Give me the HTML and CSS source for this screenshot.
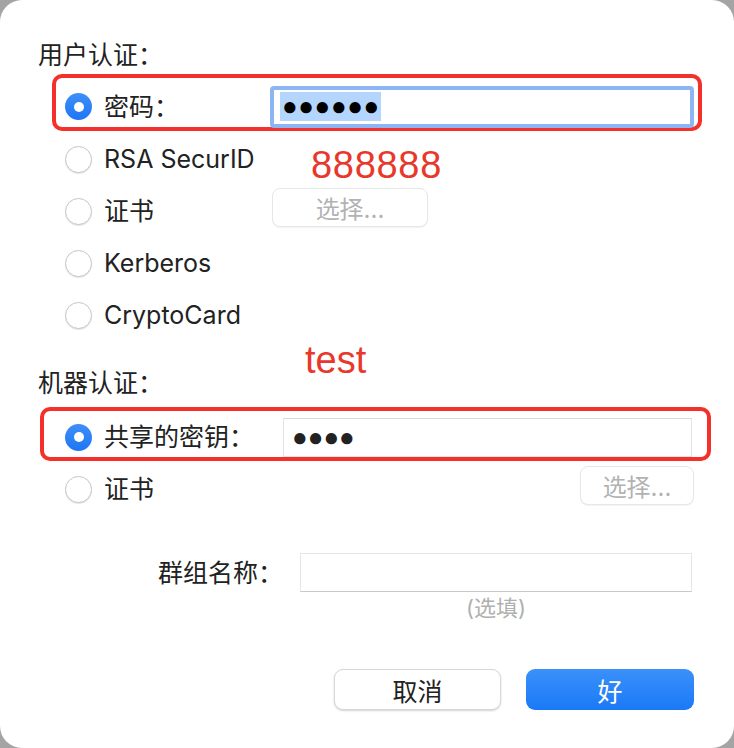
FILE: index.html
```html
<!DOCTYPE html>
<html lang="zh-CN">
<head>
<meta charset="utf-8">
<title>认证</title>
<link rel="stylesheet" href="styles.css">
</head>
<body>
<div class="window">
  <div class="title">用户认证：</div>
  <div class="mark mark-user">
    <span class="radio on"></span>
    <span class="label label-user">密码：</span>
    <div class="field field-focus"><span class="dots sel">●●●●●●</span></div>
  </div>
  <div class="opt">
    <span class="radio"></span>
    <span class="label label-user latin">RSA SecurID</span>
    <span class="note note-code">888888</span>
  </div>
  <div class="opt">
    <span class="radio"></span>
    <span class="label label-user">证书</span>
    <button class="btn choose choose-user">选择...</button>
  </div>
  <div class="opt">
    <span class="radio"></span>
    <span class="label label-user latin">Kerberos</span>
  </div>
  <div class="opt">
    <span class="radio"></span>
    <span class="label label-user latin">CryptoCard</span>
  </div>
  <div class="title title-machine">机器认证：<span class="note note-test">test</span></div>
  <div class="mark mark-machine">
    <span class="radio on"></span>
    <span class="label label-machine">共享的密钥：</span>
    <div class="field field-plain"><span class="dots dots-dark">●●●●</span></div>
  </div>
  <div class="opt opt-machine">
    <span class="radio"></span>
    <span class="label">证书</span>
    <button class="btn choose choose-machine">选择...</button>
  </div>
  <div class="group">
    <span class="label label-group">群组名称：</span>
    <div class="field field-group"></div>
  </div>
  <div class="hint">(选填)</div>
  <div class="footer">
    <button class="btn action cancel">取消</button>
    <button class="btn action ok">好</button>
  </div>
</div>
</body>
</html>
```
FILE: styles.css
```css
* { box-sizing: border-box; margin: 0; padding: 0; }
html, body { width: 734px; height: 748px; }
body {
  background: #a4a4a4;
  font-family: "Inter", "Noto Sans CJK SC", sans-serif;
  color: #222;
  font-size: 25px;
  overflow: hidden;
}
.window {
  width: 734px;
  height: 748px;
  background: #fff;
  border-radius: 22px;
  padding-top: 43px;
  display: flex;
  flex-direction: column;
}
.title {
  padding-left: 38px;
  height: 24px;
  line-height: 24px;
  font-size: 25px;
  position: relative;
}
.title-machine { margin-top: 30px; }
.mark {
  border: 4px solid #f3302a;
  border-radius: 10px;
  display: flex;
  align-items: center;
}
.mark-user {
  margin: 7px 0 0 52px;
  width: 650px;
  height: 57px;
  padding: 8px 4px 0 9px;
}
.mark-machine {
  margin: 12px 0 0 40px;
  width: 671px;
  height: 54px;
  padding: 6px 15px 0 21px;
}
.radio {
  flex: none;
  width: 27px;
  height: 27px;
  margin-right: 12px;
  border-radius: 50%;
  background: #fff;
  border: 1px solid #c6c6c6;
  box-shadow: 0 1px 1px rgba(0, 0, 0, 0.1);
  display: inline-flex;
  align-items: center;
  justify-content: center;
}
.radio.on {
  border: none;
  background: linear-gradient(#3f8ff8, #1f76f4);
  box-shadow: none;
}
.radio.on::after {
  content: "";
  width: 10px;
  height: 10px;
  border-radius: 50%;
  background: #fff;
}
.label {
  flex: none;
  font-size: 25px;
  line-height: 30px;
  white-space: nowrap;
}
.label-user { width: 166px; }
.label-machine { width: 179px; }
.field {
  flex: 1;
  background: #fff;
  display: flex;
  align-items: center;
}
.field-focus {
  height: 42px;
  border: 4px solid #8cb6f3;
  border-radius: 4px;
  padding-left: 6px;
}
.field-plain {
  height: 39px;
  border: 1px solid #e4e4e4;
  border-top-color: #d9d9d9;
  padding-left: 8px;
}
.dots {
  font-family: "Liberation Sans", sans-serif;
  font-size: 26px;
  letter-spacing: 0.6px;
  line-height: 29px;
  color: #000;
}
.sel {
  background: #b4d6fe;
  padding: 0 1px 0 2px;
}
.dots-dark { color: #222; letter-spacing: 0; }
.opt {
  height: 52px;
  padding-left: 65px;
  display: flex;
  align-items: center;
}
.mark-user + .opt { margin-top: 2px; }
.opt-machine { margin-top: 2px; padding-right: 40px; }
.note {
  font-family: "Liberation Sans", sans-serif;
  font-size: 38px;
  line-height: 38px;
  color: #e8382c;
}
.note-code { margin-left: 41px; margin-top: 12px; letter-spacing: 0.7px; }
.note-test { position: absolute; left: 305px; top: -30px; }
.btn {
  font-family: "Inter", "Noto Sans CJK SC", sans-serif;
  font-size: 24px;
  background: #fff;
  border-radius: 8px;
  cursor: default;
}
.choose {
  height: 39px;
  border: 1px solid #e7e7e7;
  box-shadow: 0 1px 1px rgba(0, 0, 0, 0.05);
  color: #b2b2b2;
}
.choose-user { width: 156px; margin-left: 2px; margin-top: -7px; }
.choose-machine { width: 114px; margin-left: auto; margin-top: -7px; }
.group {
  margin-top: 38px;
  padding-left: 158px;
  display: flex;
  align-items: center;
  height: 39px;
}
.label-group { width: 142px; }
.field-group {
  flex: none;
  width: 392px;
  height: 39px;
  border: 1px solid #e6e6e6;
  border-bottom: 1px solid #c9c9c9;
}
.hint {
  margin-top: 5px;
  margin-left: 300px;
  width: 392px;
  text-align: center;
  font-size: 22px;
  line-height: 22px;
  color: #b0b0b0;
}
.footer {
  margin-top: 50px;
  display: flex;
  justify-content: flex-end;
  gap: 25px;
  padding-right: 40px;
}
.action { height: 41px; border-radius: 9px; font-size: 25px; }
.cancel {
  width: 167px;
  border: 1px solid #d8d8d8;
  box-shadow: 0 1px 2px rgba(0, 0, 0, 0.18);
  color: #222;
}
.ok {
  width: 168px;
  border: none;
  background: linear-gradient(#3b91fa, #1a79f6);
  color: #fff;
}
```
